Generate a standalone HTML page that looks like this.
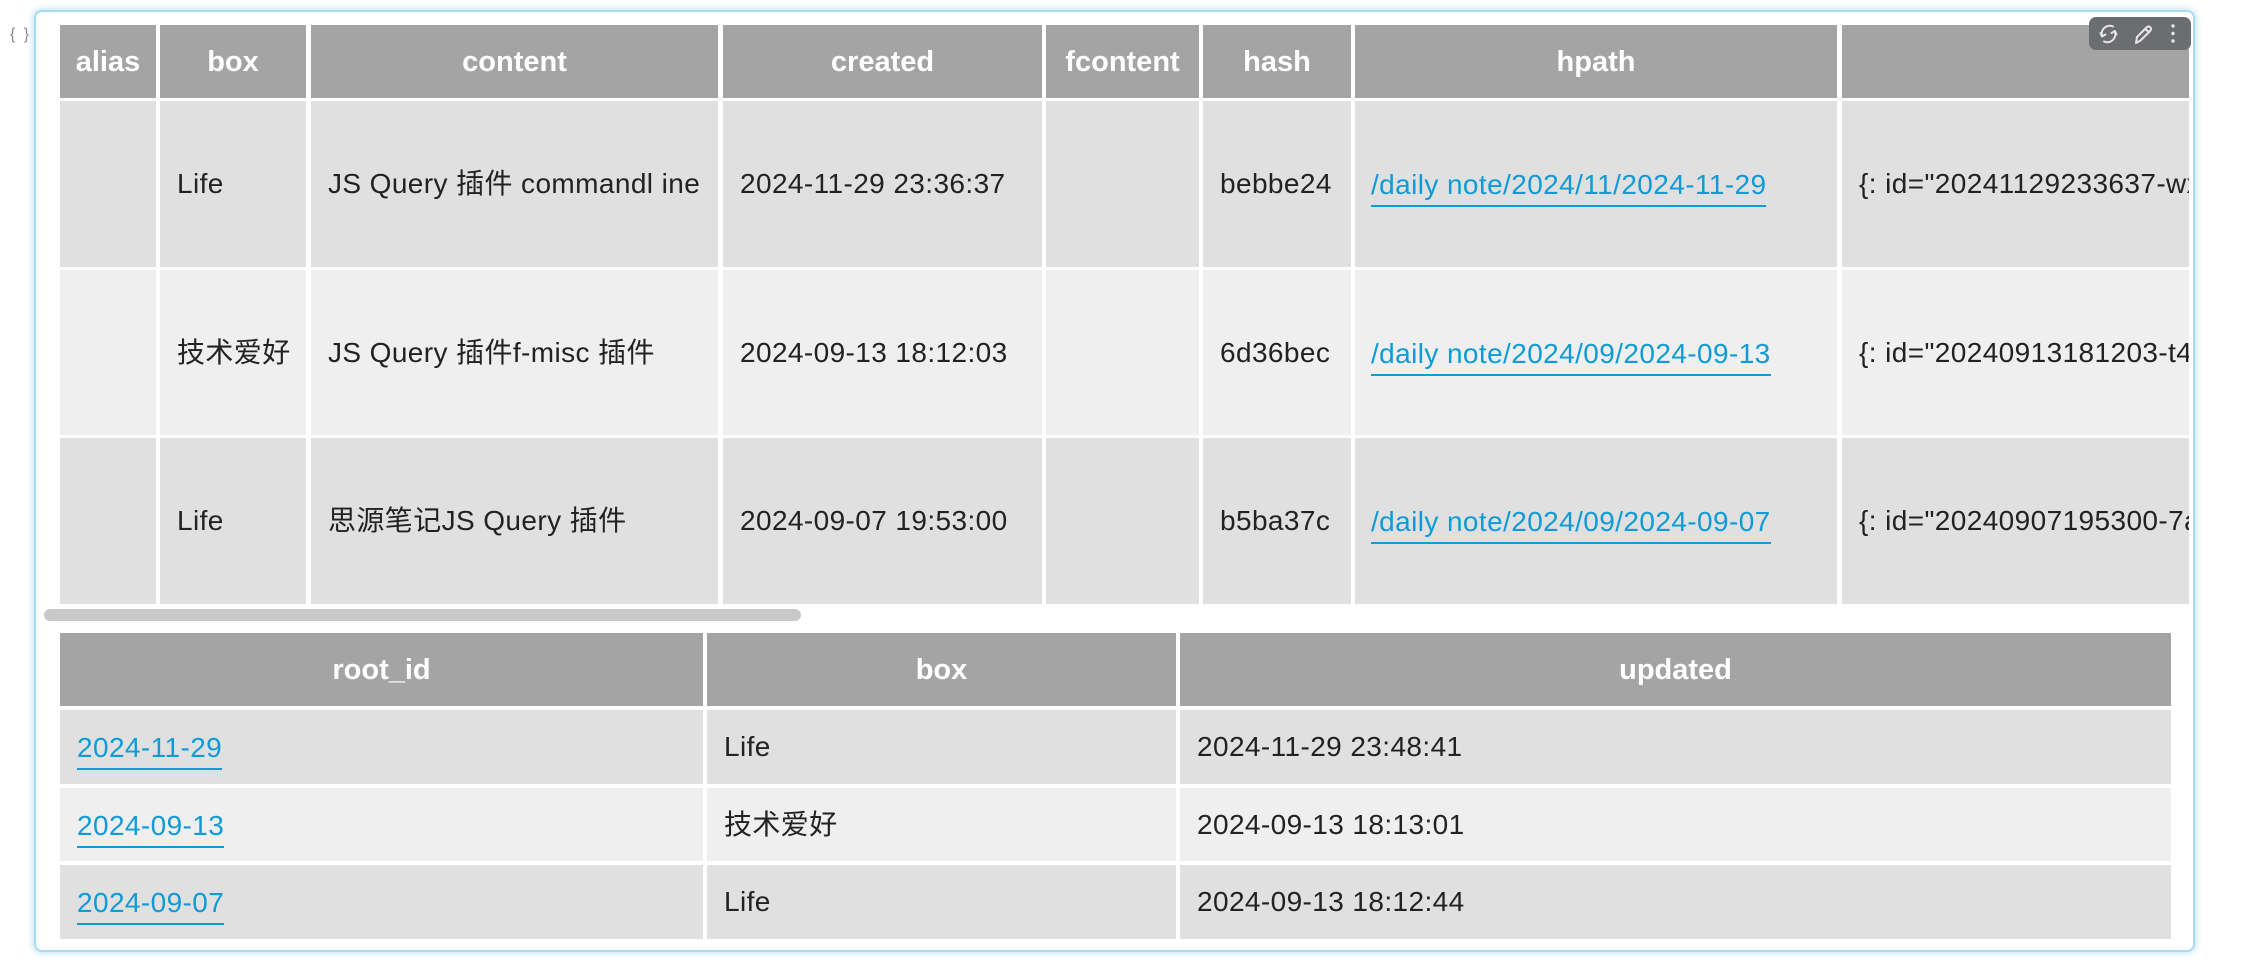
<!DOCTYPE html>
<html><head><meta charset="utf-8">
<style>
html,body{margin:0;padding:0;background:#fff;width:2244px;height:971px;overflow:hidden;font-family:"Liberation Sans","Noto Sans CJK SC",sans-serif;}
.card{position:absolute;left:34px;top:10px;width:2157px;height:938px;border:2px solid #a8dbf2;border-radius:8px;box-shadow:0 0 6px 2px #cdeaf7;background:#fff;}
.br{position:absolute;left:10px;top:26px;font-size:16px;color:#888;letter-spacing:2px;}
.c{position:absolute;box-sizing:border-box;display:flex;align-items:center;font-size:28px;line-height:32px;color:#222;padding-left:17px;white-space:nowrap;overflow:hidden;letter-spacing:0.4px;}
.c span{display:inline-block;line-height:32px;height:32px;}
.h{background:#a4a4a4;color:#fff;font-weight:bold;justify-content:center;padding:0;font-size:29px;letter-spacing:0;}
.o{background:#e0e0e0}.e{background:#efefef}
.c span.a{color:#0e9bd6;border-bottom:2px solid #0e9bd6;padding-bottom:4px;margin-top:8px;}
.sb{position:absolute;left:44px;top:609px;width:757px;height:12px;background:#c9c9c9;border-radius:6px;}
.tb{position:absolute;left:2089px;top:17px;width:102px;height:33px;background:#6b6d71;border-radius:7px;}
</style></head><body>
<div class="br">{ }</div>
<div class="card"></div>

<div class="c h" style="left:60px;top:25px;width:96px;height:73px">alias</div>
<div class="c h" style="left:160px;top:25px;width:146px;height:73px">box</div>
<div class="c h" style="left:311px;top:25px;width:407px;height:73px">content</div>
<div class="c h" style="left:723px;top:25px;width:319px;height:73px">created</div>
<div class="c h" style="left:1046px;top:25px;width:153px;height:73px">fcontent</div>
<div class="c h" style="left:1203px;top:25px;width:148px;height:73px">hash</div>
<div class="c h" style="left:1355px;top:25px;width:482px;height:73px">hpath</div>
<div class="c h" style="left:1842px;top:25px;width:347px;height:73px"></div>

<div class="c o" style="left:60px;top:101px;width:96px;height:166px"></div>
<div class="c o" style="left:160px;top:101px;width:146px;height:166px"><span>Life</span></div>
<div class="c o" style="left:311px;top:101px;width:407px;height:166px"><span>JS Query 插件 commandl ine</span></div>
<div class="c o" style="left:723px;top:101px;width:319px;height:166px"><span>2024-11-29 23:36:37</span></div>
<div class="c o" style="left:1046px;top:101px;width:153px;height:166px"></div>
<div class="c o" style="left:1203px;top:101px;width:148px;height:166px"><span>bebbe24</span></div>
<div class="c o" style="left:1355px;top:101px;width:482px;height:166px;padding-left:16px"><span class="a">/daily note/2024/11/2024-11-29</span></div>
<div class="c o" style="left:1842px;top:101px;width:347px;height:166px"><span>{: id="20241129233637-wxyzabc"</span></div>

<div class="c e" style="left:60px;top:270px;width:96px;height:165px"></div>
<div class="c e" style="left:160px;top:270px;width:146px;height:165px"><span>技术爱好</span></div>
<div class="c e" style="left:311px;top:270px;width:407px;height:165px"><span>JS Query 插件f-misc 插件</span></div>
<div class="c e" style="left:723px;top:270px;width:319px;height:165px"><span>2024-09-13 18:12:03</span></div>
<div class="c e" style="left:1046px;top:270px;width:153px;height:165px"></div>
<div class="c e" style="left:1203px;top:270px;width:148px;height:165px"><span>6d36bec</span></div>
<div class="c e" style="left:1355px;top:270px;width:482px;height:165px;padding-left:16px"><span class="a">/daily note/2024/09/2024-09-13</span></div>
<div class="c e" style="left:1842px;top:270px;width:347px;height:165px"><span>{: id="20240913181203-t4abcde"</span></div>

<div class="c o" style="left:60px;top:438px;width:96px;height:166px"></div>
<div class="c o" style="left:160px;top:438px;width:146px;height:166px"><span>Life</span></div>
<div class="c o" style="left:311px;top:438px;width:407px;height:166px"><span>思源笔记JS Query 插件</span></div>
<div class="c o" style="left:723px;top:438px;width:319px;height:166px"><span>2024-09-07 19:53:00</span></div>
<div class="c o" style="left:1046px;top:438px;width:153px;height:166px"></div>
<div class="c o" style="left:1203px;top:438px;width:148px;height:166px"><span>b5ba37c</span></div>
<div class="c o" style="left:1355px;top:438px;width:482px;height:166px;padding-left:16px"><span class="a">/daily note/2024/09/2024-09-07</span></div>
<div class="c o" style="left:1842px;top:438px;width:347px;height:166px"><span>{: id="20240907195300-7abcdef"</span></div>

<div class="sb"></div>

<div class="c h" style="left:60px;top:633px;width:643px;height:73px">root_id</div>
<div class="c h" style="left:707px;top:633px;width:469px;height:73px">box</div>
<div class="c h" style="left:1180px;top:633px;width:991px;height:73px">updated</div>

<div class="c o" style="left:60px;top:710px;width:643px;height:74px"><span class="a">2024-11-29</span></div>
<div class="c o" style="left:707px;top:710px;width:469px;height:74px"><span>Life</span></div>
<div class="c o" style="left:1180px;top:710px;width:991px;height:74px"><span>2024-11-29 23:48:41</span></div>

<div class="c e" style="left:60px;top:788px;width:643px;height:73px"><span class="a">2024-09-13</span></div>
<div class="c e" style="left:707px;top:788px;width:469px;height:73px"><span>技术爱好</span></div>
<div class="c e" style="left:1180px;top:788px;width:991px;height:73px"><span>2024-09-13 18:13:01</span></div>

<div class="c o" style="left:60px;top:865px;width:643px;height:74px"><span class="a">2024-09-07</span></div>
<div class="c o" style="left:707px;top:865px;width:469px;height:74px"><span>Life</span></div>
<div class="c o" style="left:1180px;top:865px;width:991px;height:74px"><span>2024-09-13 18:12:44</span></div>

<div class="tb">
<svg width="102" height="33" viewBox="0 0 102 33" fill="none" stroke="#e6e6e6" stroke-width="2" stroke-linecap="round" stroke-linejoin="round">
<path d="M24 9.5a8 8 0 0 0-11 9.5M15 24.5a8 8 0 0 0 11-9.5"/>
<path d="M11.5 16l1.5 3.5 3.5-2M27.5 17.5l-1.5-3.5-3.5 2"/>
<path d="M47 26l1-6 10-10a2.5 2.5 0 0 1 3.5 3.5l-10 10z M56.5 12l3.5 3.5"/>
<circle cx="84" cy="9" r="1.7" fill="#e6e6e6" stroke="none"/>
<circle cx="84" cy="16.5" r="1.7" fill="#e6e6e6" stroke="none"/>
<circle cx="84" cy="24" r="1.7" fill="#e6e6e6" stroke="none"/>
</svg>
</div>
</body></html>
